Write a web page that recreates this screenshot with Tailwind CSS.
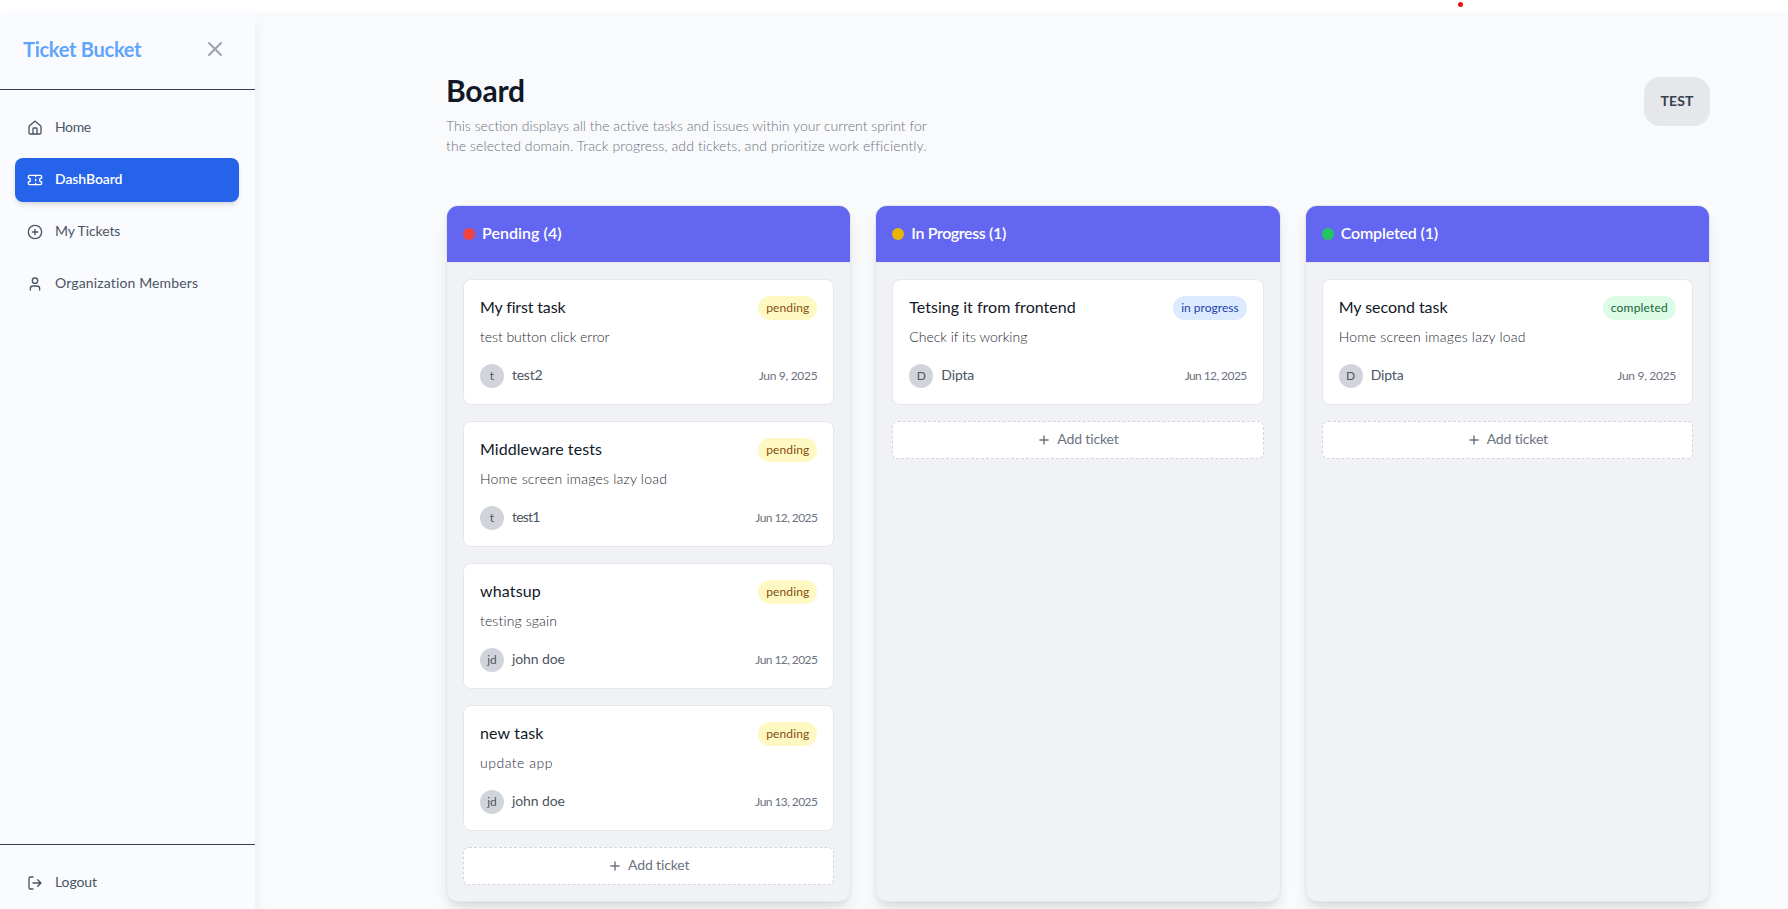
<!DOCTYPE html>
<html lang="en">
<head>
<meta charset="utf-8">
<title>Ticket Bucket</title>
<script src="https://cdn.jsdelivr.net/npm/@tailwindcss/browser@4"></script>
</head>
<body class="h-[909px] overflow-hidden bg-white pt-3 font-['Lato','Liberation_Sans',sans-serif] tracking-[0.001px]">
<div class="flex h-[897px] bg-[#f9fafc]">
  <aside class="relative z-10 flex w-[255px] shrink-0 flex-col bg-[#fafbff] shadow-[0_10px_15px_-3px_rgba(0,0,0,0.1),0_4px_6px_-4px_rgba(0,0,0,0.1)]">
    <div class="flex h-[77px] shrink-0 items-center justify-between pr-7 pb-[3px] pl-[23px]">
      <h1 class="text-xl font-bold tracking-[-0.27px] whitespace-nowrap text-[#60a5fa]">Ticket Bucket</h1>
      <svg class="size-6 text-[#9ca3af]" viewBox="0 0 24 24" fill="none" stroke="currentColor" stroke-width="2" stroke-linecap="round" stroke-linejoin="round"><path d="M18 6 6 18M6 6l12 12"/></svg>
    </div>
    <div class="h-px shrink-0 bg-[#374151]"></div>
    <nav class="flex flex-1 flex-col gap-2 pt-4 pr-4 pl-[15px] text-sm text-[#4b5563]">
      <a class="flex h-11 items-center gap-3 px-3 pt-[3px] pb-[3px]"><svg class="size-4" viewBox="0 0 24 24" fill="none" stroke="currentColor" stroke-width="2" stroke-linecap="round" stroke-linejoin="round"><path d="M15 21v-8a1 1 0 0 0-1-1h-4a1 1 0 0 0-1 1v8"/><path d="M3 10a2 2 0 0 1 .709-1.528l7-5.999a2 2 0 0 1 2.582 0l7 5.999A2 2 0 0 1 21 10v9a2 2 0 0 1-2 2H5a2 2 0 0 1-2-2z"/></svg><span class="pb-0.5 tracking-[-0.35px]">Home</span></a>
      <a class="flex h-11 items-center gap-3 rounded-lg bg-[#2563eb] px-3 font-semibold text-white shadow-md"><svg class="size-4" viewBox="0 0 24 24" fill="none" stroke="currentColor" stroke-width="2" stroke-linecap="round" stroke-linejoin="round"><path d="M2 9a3 3 0 0 1 0 6v2a2 2 0 0 0 2 2h16a2 2 0 0 0 2-2v-2a3 3 0 0 1 0-6V7a2 2 0 0 0-2-2H4a2 2 0 0 0-2 2Z"/><path d="M13 5v2M13 17v2M13 11v2"/></svg><span class="pb-0.5 tracking-[-0.09px]">DashBoard</span></a>
      <a class="flex h-11 items-center gap-3 px-3"><svg class="size-4" viewBox="0 0 24 24" fill="none" stroke="currentColor" stroke-width="2" stroke-linecap="round" stroke-linejoin="round"><circle cx="12" cy="12" r="10"/><path d="M8 12h8M12 8v8"/></svg><span class="pb-0.5 tracking-[-0.1px]">My Tickets</span></a>
      <a class="flex h-11 items-center gap-3 px-3"><svg class="size-4" viewBox="0 0 24 24" fill="none" stroke="currentColor" stroke-width="2" stroke-linecap="round" stroke-linejoin="round"><path d="M19 21v-2a4 4 0 0 0-4-4H9a4 4 0 0 0-4 4v2"/><circle cx="12" cy="7" r="4"/></svg><span class="pb-0.5 tracking-[0.14px]">Organization Members</span></a>
    </nav>
    <div class="h-[65px] shrink-0 border-t border-[#374151] pt-4 pl-[15px] text-sm text-[#4b5563]">
      <a class="flex h-11 items-center gap-3 px-3"><svg class="size-4" viewBox="0 0 24 24" fill="none" stroke="currentColor" stroke-width="2" stroke-linecap="round" stroke-linejoin="round"><path d="M9 21H5a2 2 0 0 1-2-2V5a2 2 0 0 1 2-2h4"/><path d="m16 17 5-5-5-5M21 12H9"/></svg><span class="pb-0.5 tracking-[-0.1px]">Logout</span></a>
    </div>
  </aside>
  <main class="flex-1 pt-[65px] pr-[78px] pl-[191px]">
    <header class="flex h-32 items-start justify-between">
      <div>
        <h2 class="-mt-[5px] text-[30px] leading-9 font-bold tracking-[-0.2px] text-[#111827]">Board</h2>
        <p class="mt-2 text-sm leading-5 font-light whitespace-nowrap text-[#6b7280]"><span class="tracking-[0.015px]">This section displays all the active tasks and issues within your current sprint for</span><br><span class="tracking-[0.11px]">the selected domain. Track progress, add tickets, and prioritize work efficiently.</span></p>
      </div>
      <button class="h-[49px] w-[66px] rounded-2xl bg-[#e5e7eb] pb-0.5 text-sm font-bold tracking-[0.15px] text-[#374151]">TEST</button>
    </header>
    <div id="board" class="grid h-[697px] grid-cols-3 gap-6"></div>
  </main>
</div>
<div class="absolute top-[1.5px] left-[1458px] size-[5px] rounded-full bg-[#e81010]"></div>
<script>
const pending = { text: 'pending', style: 'bg-[#fef9c3] text-[#854d0e] tracking-[0.11px]' };
const inProgress = { text: 'in progress', style: 'bg-[#dbeafe] text-[#1e40af] tracking-[0.01px]' };
const completed = { text: 'completed', style: 'bg-[#dcfce7] text-[#166534] tracking-[0.19px]' };
const jun9 = ['Jun 9, 2025', 'tracking-[-0.3px]'], jun12 = ['Jun 12, 2025', 'tracking-[-0.58px]'], jun13 = ['Jun 13, 2025', 'tracking-[-0.58px]'];
const lazy = ['Home screen images lazy load', 'tracking-[0.22px]'];
const john = ['john doe', 'tracking-[-0.1px]'], dipta = ['Dipta', 'tracking-[-0.15px]'];
const columns = [
  { name: ['Pending (4)', 'tracking-[0.05px]'], dot: 'bg-[#ef4444]', cards: [
    { title: ['My first task', 'tracking-[-0.15px]'], status: pending, text: ['test button click error', 'tracking-[-0.04px]'], initials: 't', user: ['test2', 'tracking-[-0.27px]'], date: jun9 },
    { title: ['Middleware tests', 'tracking-[0.07px]'], status: pending, text: lazy, initials: 't', user: ['test1', 'tracking-[-0.8px]'], date: jun12 },
    { title: ['whatsup', 'tracking-[0.15px]'], status: pending, text: ['testing sgain', 'tracking-[0.145px]'], initials: 'jd', user: john, date: jun12 },
    { title: ['new task', 'tracking-[0.16px]'], status: pending, text: ['update app', 'tracking-[0.5px]'], initials: 'jd', user: john, date: jun13 } ] },
  { name: ['In Progress (1)', 'tracking-[-0.38px]'], dot: 'bg-[#eab308]', cards: [
    { title: ['Tetsing it from frontend', 'tracking-[0.02px]'], status: inProgress, text: ['Check if its working', 'tracking-[-0.02px]'], initials: 'D', user: dipta, date: jun12 } ] },
  { name: ['Completed (1)', 'tracking-[-0.165px]'], dot: 'bg-[#22c55e]', cards: [
    { title: ['My second task', 'tracking-[-0.03px]'], status: completed, text: lazy, initials: 'D', user: dipta, date: jun9 } ] },
];
const label = ([text, style]) => `<span class="pb-0.5 ${style}">${text}</span>`;
document.getElementById('board').innerHTML = columns.map(c => `
<section class="overflow-hidden rounded-xl border border-[#e5e7eb] bg-[#f1f2f6] shadow-lg">
  <h3 class="flex h-14 items-center gap-[7px] bg-[#6366f1] px-4 font-semibold text-white"><i class="size-3 rounded-full ${c.dot}"></i>${label(c.name)}</h3>
  <div class="flex flex-col gap-4 border-t border-[#e5e7eb] p-4">
  ${c.cards.map(k => `<article class="rounded-lg border border-[#e5e7eb] bg-white p-4">
    <div class="flex h-6 items-center justify-between text-[#111827]">${label(k.title)}<b class="flex h-6 items-center rounded-full px-2 text-xs font-normal ${k.status.style}">${k.status.text}</b></div>
    <p class="mt-2 flex h-5 items-center text-sm font-light text-[#1f2937]">${label(k.text)}</p>
    <div class="mt-4 flex h-6 items-center text-sm text-[#4b5563]"><i class="mr-2 flex size-6 items-center justify-center rounded-full bg-[#d1d5db] text-xs not-italic">${k.initials}</i>${label(k.user)}<time class="ml-auto text-xs text-[#6b7280] ${k.date[1]}">${k.date[0]}</time></div>
  </article>`).join('')}
  <button class="flex h-[38px] items-center justify-center gap-1.5 rounded-md border border-dashed border-[#d1d5db] bg-white text-sm text-[#6b7280]"><svg class="size-3.5" viewBox="0 0 24 24" fill="none" stroke="currentColor" stroke-width="2.4" stroke-linecap="round"><path d="M5 12h14M12 5v14"/></svg>${label(['Add ticket', 'tracking-[-0.14px]'])}</button>
  </div>
</section>`).join('');
</script>
</body>
</html>
